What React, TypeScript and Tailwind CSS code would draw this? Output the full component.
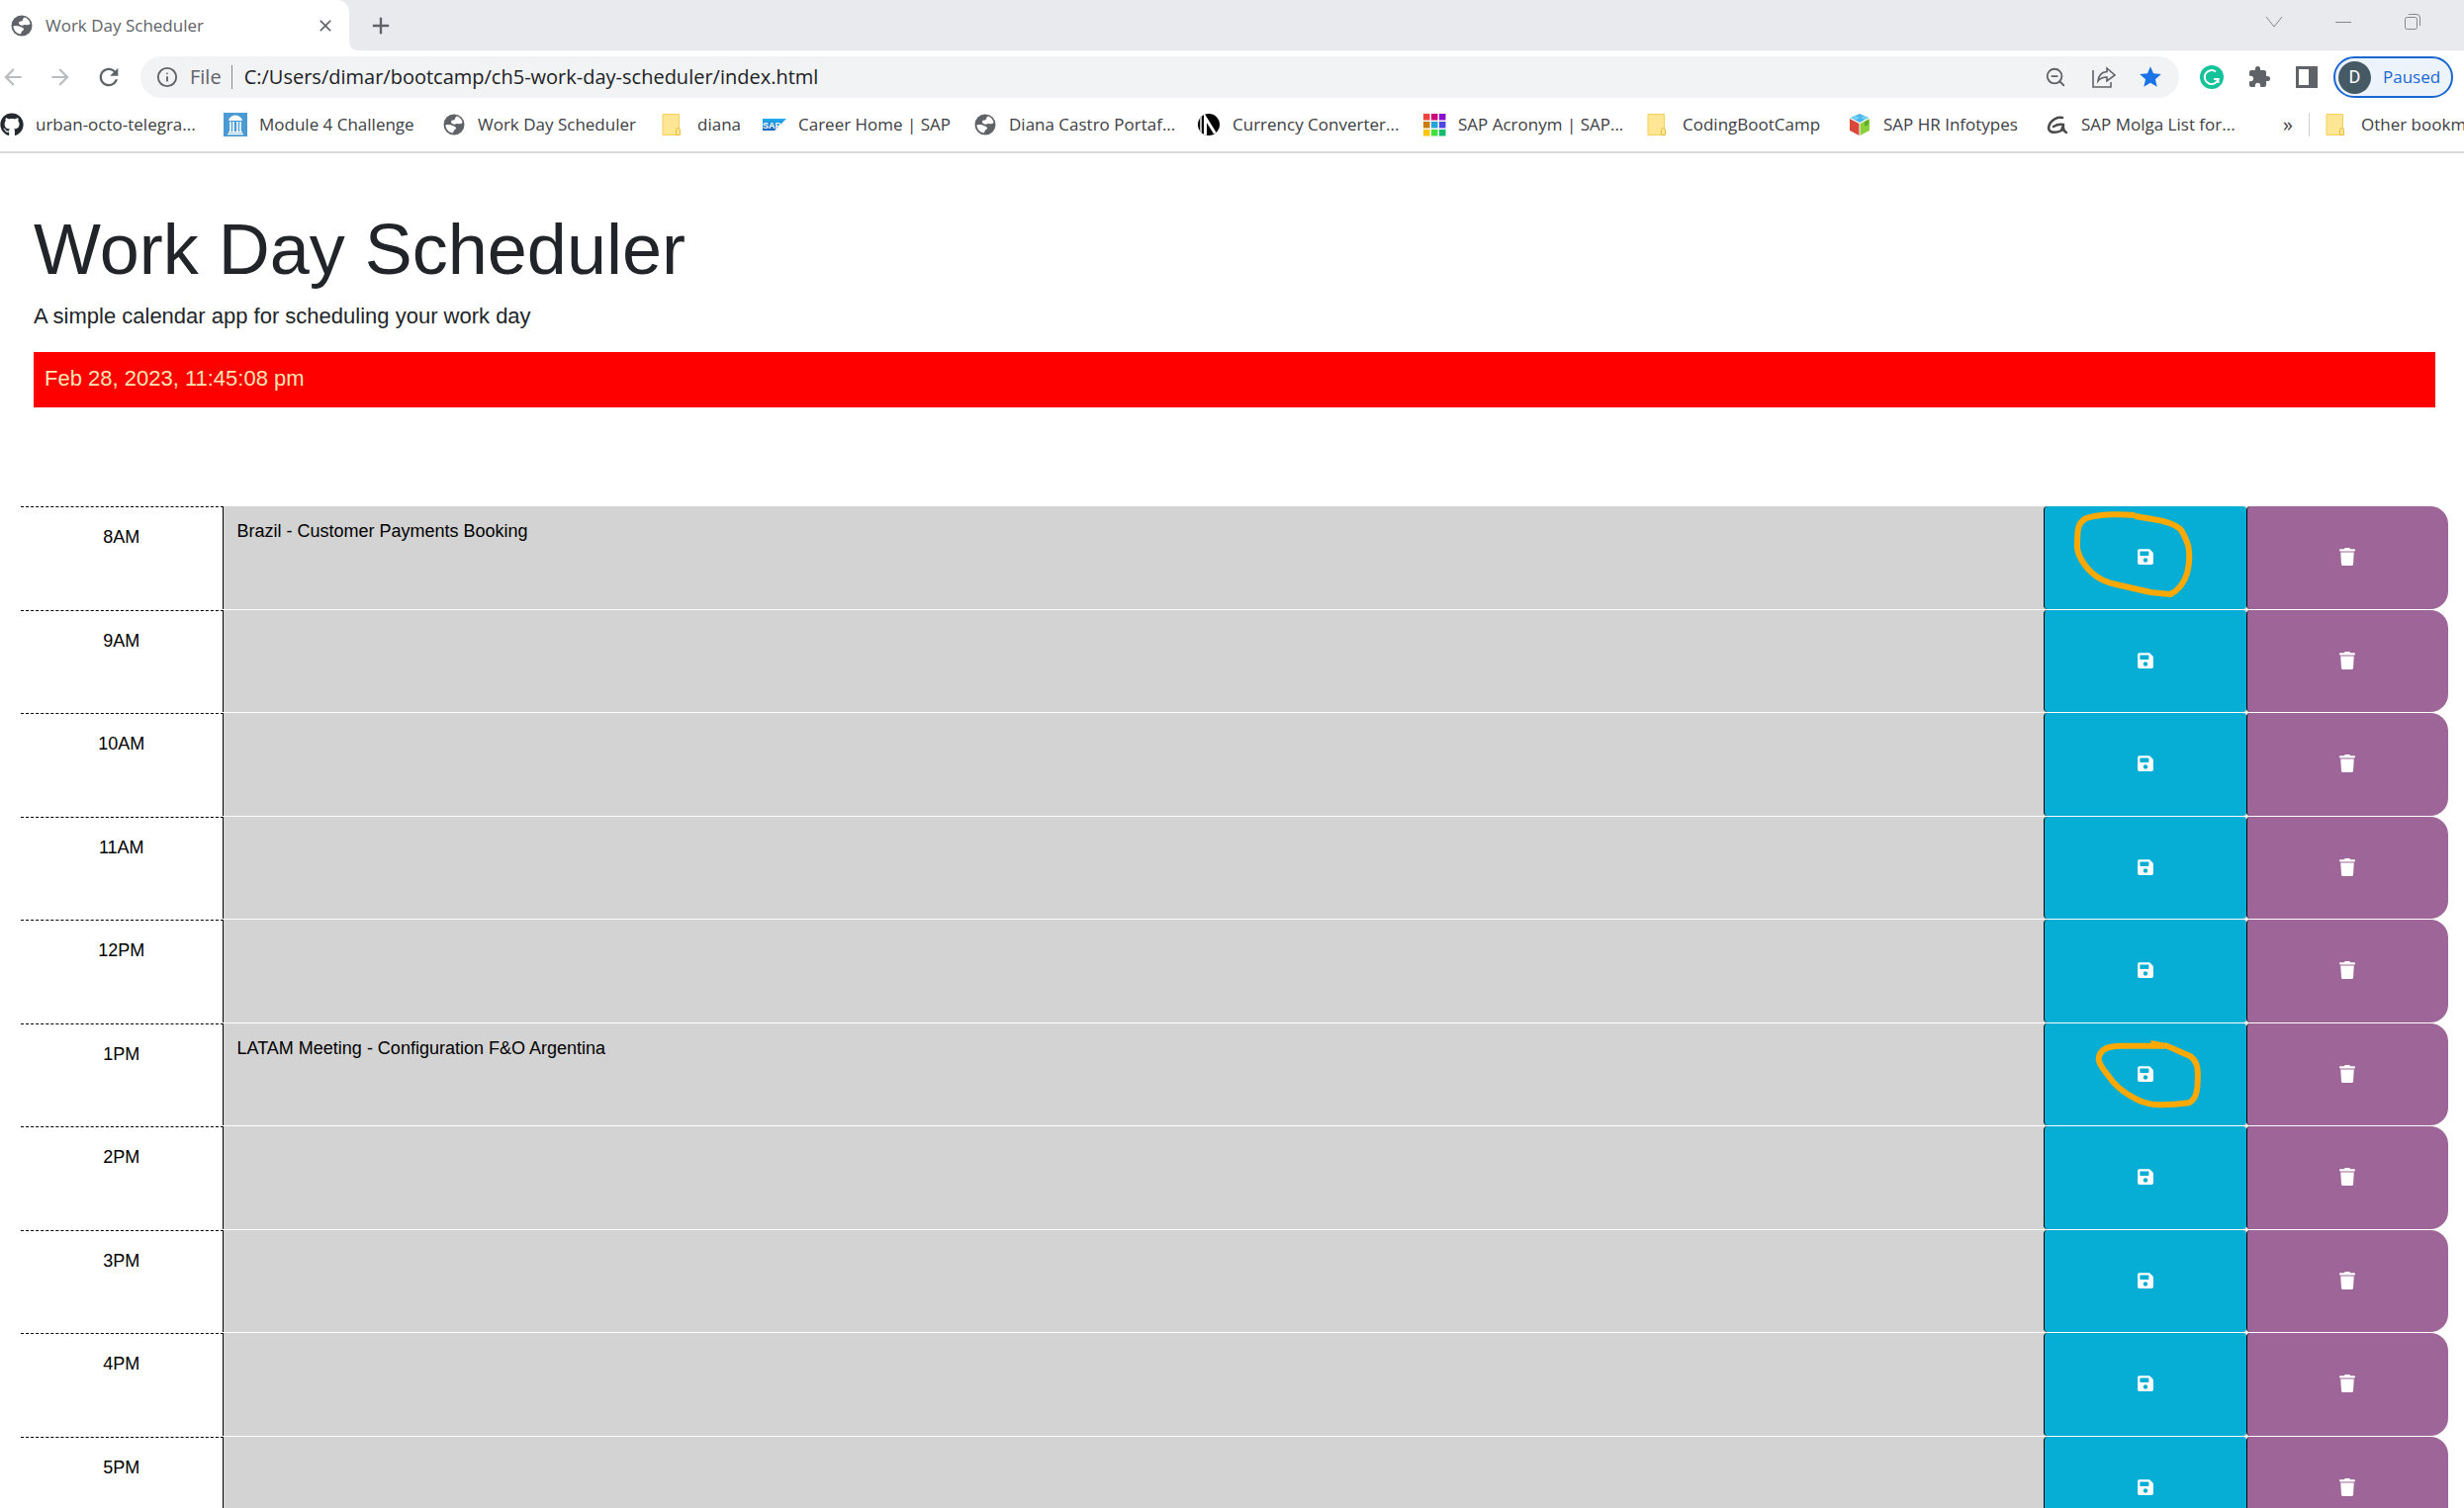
import React from 'react';
import { FaSave, FaTrash, FaGithub } from 'react-icons/fa';
import { MdClose, MdAdd, MdArrowBack, MdArrowForward, MdRefresh, MdExtension, MdStar } from 'react-icons/md';
import { Info, ZoomOut } from 'lucide-react';

const hours: { label: string; event: string }[] = [
  { label: '8AM', event: 'Brazil - Customer Payments Booking' },
  { label: '9AM', event: '' },
  { label: '10AM', event: '' },
  { label: '11AM', event: '' },
  { label: '12PM', event: '' },
  { label: '1PM', event: 'LATAM Meeting - Configuration F&O Argentina' },
  { label: '2PM', event: '' },
  { label: '3PM', event: '' },
  { label: '4PM', event: '' },
  { label: '5PM', event: '' },
];

// Hand-drawn loops around two of the save buttons.
const markings: Record<string, string> = {
  '8AM': 'M92 9 C68 7 52 9 43 12 C35 16 34 23 34 31 C33 43 34 47 38 54 C46 68 58 76 73 79 L108 87 L128 89 C136 85 142 77 145 67 C148 55 147 45 146 40 C143 31 141 27 138 23 C132 18 124 15 110 13 L92 10',
  '1PM': 'M108 20 L122 23 L78 23 C62 23 55 28 55 37 C56 44 62 49 66 55 C72 64 79 69 86 73 C96 79 104 83 118 83 C130 83 140 82 147 81 C154 78 156 69 156 58 C157 43 154 37 148 33 C138 29 130 25 122 22',
};

function Folder() {
  return (
    <svg viewBox="0 0 24 24" className="size-6 shrink-0" aria-hidden="true">
      <path d="M1 1.500h16.500v21H1z" fill="#ffe694" stroke="#f3d05c" />
      <path d="M14.500 22.500v-5q0-2 2-2t2 2v5z" fill="#ffe694" stroke="#e6bd3c" />
    </svg>
  );
}

function Globe() {
  return (
    <svg viewBox="0 0 24 24" className="size-6 shrink-0" aria-hidden="true">
      <circle cx="12" cy="12" r="10.500" fill="#5f6368" />
      <path d="M15 3.500c3 1 5 3.500 5.500 6.500-1.500 1.500-3 1.500-4.500 1.200-1.500-.4-2 .8-3.500.6-1.800-.3-3.500-1-3.500-2.600 0-1.400 1.500-1.600 2.700-1.700C13 7.300 13 6 13.300 5.200 13.600 4.300 14.300 4 15 3.500z" fill="#fff" />
      <path d="M3.500 12.500c2-.8 5-.6 7 .5 1.500 1 3.500.6 3.500 2.500 0 1.600-1.800 1.700-2.300 2.800-.4 1-.2 1.700-1.200 2.200C6.500 19.800 3.600 16.500 3.500 12.500z" fill="#fff" />
    </svg>
  );
}

function Module() {
  return (
    <svg viewBox="0 0 24 24" className="size-6 shrink-0" aria-hidden="true">
      <path fill="#4a9bd4" d="M0 0h24v24H0z" />
      <path d="M5 8q1-5 7-5.500q6 .5 7 5.500z" fill="#fff" />
      <path d="M7 9v10M10 9v10M14 9v10M17 9v10" stroke="#fff" strokeWidth="1.600" />
      <path d="M5 19h14v1.500H5zM4 21h16v1.200H4z" fill="#fff" />
    </svg>
  );
}

function Sap() {
  return (
    <svg viewBox="0 0 24 12" className="h-3 w-6 shrink-0" aria-hidden="true">
      <defs>
        <linearGradient id="sap" x2="0" y2="1">
          <stop stopColor="#1fb0f0" />
          <stop offset="1" stopColor="#1d5fb8" />
        </linearGradient>
      </defs>
      <path d="M0 0h24L12 12H0z" fill="url(#sap)" />
      <text x="0" y="9.500" fontSize="9" fontWeight="700" fontFamily="Liberation Sans, sans-serif" fill="#fff">SAP</text>
    </svg>
  );
}

function Currency() {
  return (
    <svg viewBox="0 0 24 24" className="size-6 shrink-0" aria-hidden="true">
      <defs>
        <clipPath id="disc"><circle cx="12" cy="12" r="11" /></clipPath>
      </defs>
      <g clipPath="url(#disc)">
        <path d="M0 0h24v24H0z" fill="#000" />
        <path d="M4 0v24" stroke="#fff" strokeWidth="1.500" />
        <path d="M8.500 24V5l10 16" fill="none" stroke="#fff" strokeWidth="3" />
      </g>
    </svg>
  );
}

function ColorGrid() {
  const colors = ['#f0433d', '#cc007a', '#8a0fd0', '#cc7a0a', '#22a5dc', '#5046e5', '#ffc40c', '#3ee03c', '#12bb6e'];
  return (
    <svg viewBox="0 0 24 24" className="size-6 shrink-0" aria-hidden="true">
      {colors.map((c, i) => (
        <rect key={c} x={1 + (i % 3) * 8} y={1 + Math.floor(i / 3) * 8} width="6.500" height="6.500" fill={c} />
      ))}
    </svg>
  );
}

function Cube() {
  return (
    <svg viewBox="0 0 24 24" className="size-6 shrink-0" aria-hidden="true">
      <path d="M12 1l9 4-9 5-9-5z" fill="#4fb4ea" />
      <path d="M8 3l4 2-4 2.500L3 5zM16 3l5 2-4 2-4-2z" fill="#6fd0f2" />
      <path d="M2 6l9.500 5v12L2 18z" fill="#d9483b" />
      <path d="M22 6l-9.500 5v12l9.500-5z" fill="#8ccf3c" />
      <path d="M17 9l4-2v5l-4 2z" fill="#5fae2c" />
    </svg>
  );
}

function Molga() {
  return (
    <svg viewBox="0 0 24 24" className="size-6 shrink-0" fill="none" stroke="#4a4a4a" strokeWidth="2.500" strokeLinecap="round" strokeLinejoin="round" aria-hidden="true">
      <path d="M17 5Q10 4 5 10Q1 16 5 19Q10 21 16 18L18 12Q13 11 8 14M18 12Q17 18 21 20" />
    </svg>
  );
}

const bookmarks: { label: string; icon: React.ReactNode; box: string }[] = [
  { label: 'urban-octo-telegra...', icon: <FaGithub className="size-6 shrink-0 text-[#24292f]" />, box: 'w-[226px]' },
  { label: 'Module 4 Challenge', icon: <Module />, box: 'w-[221px]' },
  { label: 'Work Day Scheduler', icon: <Globe />, box: 'w-[222px]' },
  { label: 'diana', icon: <Folder />, box: 'w-[102px]' },
  { label: 'Career Home | SAP', icon: <Sap />, box: 'w-[213px]' },
  { label: 'Diana Castro Portaf...', icon: <Globe />, box: 'w-[226px]' },
  { label: 'Currency Converter...', icon: <Currency />, box: 'w-[228px]' },
  { label: 'SAP Acronym | SAP...', icon: <ColorGrid />, box: 'w-[227px]' },
  { label: 'CodingBootCamp', icon: <Folder />, box: 'w-[203px]' },
  { label: 'SAP HR Infotypes', icon: <Cube />, box: 'w-[200px]' },
  { label: 'SAP Molga List for...', icon: <Molga />, box: 'w-[200px]' },
];

function TabStrip() {
  return (
    <div className="flex h-[51px] bg-[#e8eaed] text-[#5f6368]">
      <div className="flex w-[353px] items-center rounded-tr-xl bg-white pr-[14px] pl-[10px]">
        <Globe />
        <span className="ml-3 flex-1 text-[17px]">Work Day Scheduler</span>
        <button aria-label="Close tab"><MdClose className="size-5" /></button>
      </div>
      <svg viewBox="0 0 10 10" className="size-[10px] self-end" aria-hidden="true">
        <path d="M0 0q0 10 10 10H0z" fill="#fff" />
      </svg>
      <button aria-label="New tab" className="ml-2"><MdAdd className="size-7" /></button>
      <div className="ml-auto flex items-center gap-[52px] pr-[43px] pb-2 text-[#85878a]">
        <button aria-label="Search tabs">
          <svg viewBox="0 0 18 18" className="size-[18px]" fill="none" stroke="currentColor"><path d="M1 4l8 10 8-10" /></svg>
        </button>
        <button aria-label="Minimize">
          <svg viewBox="0 0 18 18" className="size-[18px]" fill="none" stroke="currentColor"><path d="M1 9.500h16" /></svg>
        </button>
        <button aria-label="Restore">
          <svg viewBox="0 0 18 18" className="size-[18px]" fill="none" stroke="currentColor">
            <rect x="1.500" y="4.500" width="12" height="12" rx="2" /><path d="M5 1.500h8q3.500 0 3.500 3.500v8" />
          </svg>
        </button>
      </div>
    </div>
  );
}

function Toolbar() {
  return (
    <div className="flex h-[54px] items-center pr-[11px] text-[#5f6368]">
      <button aria-label="Back" className="text-[#babcbe]"><MdArrowBack className="size-[26px]" /></button>
      <button aria-label="Forward" className="ml-[22px] text-[#babcbe]"><MdArrowForward className="size-[26px]" /></button>
      <button aria-label="Reload" className="ml-[22px]"><MdRefresh className="size-7" /></button>
      <div className="ml-[18px] flex h-[42px] flex-1 items-center rounded-full bg-[#f1f3f4] px-4">
        <Info className="size-[22px]" strokeWidth={2} aria-hidden="true" />
        <span className="ml-3 text-xl">File</span>
        <span className="ml-[10px] h-6 w-px bg-[#85888c]" />
        <input aria-label="Address" defaultValue="C:/Users/dimar/bootcamp/ch5-work-day-scheduler/index.html" className="ml-3 min-w-0 flex-1 bg-transparent text-xl text-[#202124] outline-none" />
        <button aria-label="Zoom"><ZoomOut className="size-[22px]" /></button>
        <button aria-label="Share" className="ml-[26px]">
          <svg viewBox="0 0 24 24" className="size-6" fill="none" stroke="currentColor" strokeWidth="1.600">
            <path d="M1 5v17h18v-5M15 3l8 7-8 6v-4q-6 0-9 4 1-9 9-9.500z" />
          </svg>
        </button>
        <button aria-label="Bookmark this page" className="ml-[22px] text-[#1a73e8]"><MdStar className="size-[26px]" /></button>
      </div>
      <button aria-label="Grammarly" className="ml-[21px]">
        <svg viewBox="0 0 24 24" className="size-6">
          <circle cx="12" cy="12" r="12" fill="#15c39a" />
          <path d="M16 6.500A7 7 0 1 0 18.500 14H14M18.500 13v5" fill="none" stroke="#fff" strokeWidth="2" />
        </svg>
      </button>
      <button aria-label="Extensions" className="ml-6"><MdExtension className="size-6" /></button>
      <button aria-label="Side panel" className="ml-[25px]">
        <svg viewBox="0 0 22 22" className="size-[22px]"><path fill="currentColor" fillRule="evenodd" d="M0 0h22v22H0zM3 3v16h10V3z" /></svg>
      </button>
      <button className="ml-4 flex h-[42px] w-[121px] items-center rounded-full border-2 border-[#1967d2] bg-[#edf3fb] pl-[3px] text-[17px] text-[#1967d2]">
        <span className="flex size-[33px] items-center justify-center rounded-full bg-[#455a64] font-[Roboto] text-lg text-white">D</span>
        <span className="ml-3">Paused</span>
      </button>
    </div>
  );
}

function Bookmarks() {
  return (
    <nav className="flex h-[50px] items-center overflow-hidden border-b-2 border-[#d9dadc] pb-[6px] text-[17px]/6 whitespace-nowrap text-[#3c4043]">
      {bookmarks.map((b) => (
        <a key={b.label} href="#" className={`flex shrink-0 items-center gap-3 ${b.box}`}>
          {b.icon}
          <span>{b.label}</span>
        </a>
      ))}
      <button aria-label="More bookmarks" className="ml-auto text-xl/6">»</button>
      <a href="#" className="ml-4 flex w-[157px] shrink-0 items-center gap-3 border-l border-[#cfd1d4] pl-4">
        <Folder />
        <span>Other bookmarks</span>
      </a>
    </nav>
  );
}

function Hour({ label, event }: { label: string; event: string }) {
  const mark = markings[label];
  return (
    <div className="grid h-[105px] grid-cols-12 border-b border-white even:h-[104px]">
      <label htmlFor={label} className="border-t border-r border-dashed border-t-black border-r-black pt-4 text-center text-lg/7 text-black [border-right-style:solid]">{label}</label>
      <textarea id={label} defaultValue={event} className="col-span-9 block resize-none bg-[#d3d3d3] px-[14px] py-[11px] text-lg/7 text-black outline-none" />
      <div className="relative bg-[#d3d3d3]">
        <button aria-label={`Save ${label}`} className="flex size-full items-center justify-center rounded border-l border-black bg-[#06aed5] pb-[2px] text-lg text-white">
          <FaSave />
        </button>
        {mark && (
          <svg viewBox="0 0 204 104" className="pointer-events-none absolute inset-0 size-full" fill="none" stroke="#ffa800" strokeWidth="6" strokeLinejoin="round" aria-hidden="true">
            <path d={mark} />
          </svg>
        )}
      </div>
      <button aria-label={`Delete ${label}`} className="flex items-center justify-center rounded-l rounded-r-[18px] border-l border-black bg-[#9d6598] pb-[2px] text-lg text-white">
        <FaTrash />
      </button>
    </div>
  );
}

export default function App() {
  return (
    <div className="h-screen overflow-hidden bg-white font-['Open_Sans',sans-serif]">
      <TabStrip />
      <Toolbar />
      <Bookmarks />
      <main className="font-['Liberation_Sans',Arial,sans-serif] text-[#212529]">
        <header className="pt-[54px] pr-[29px] pb-[100px] pl-[34px]">
          <h1 className="text-[72px]/[86px]">Work Day Scheduler</h1>
          <p className="mt-2 text-[22px]/[34px]">A simple calendar app for scheduling your work day</p>
          <p className="mt-[19px] h-14 bg-[#ff0000] px-[11px] pt-[10px] text-[22px]/[34px] text-[#ffe4b5]">Feb 28, 2023, 11:45:08 pm</p>
        </header>
        <section className="pr-4 pl-[21px]">
          {hours.map((h) => <Hour key={h.label} {...h} />)}
        </section>
      </main>
    </div>
  );
}
